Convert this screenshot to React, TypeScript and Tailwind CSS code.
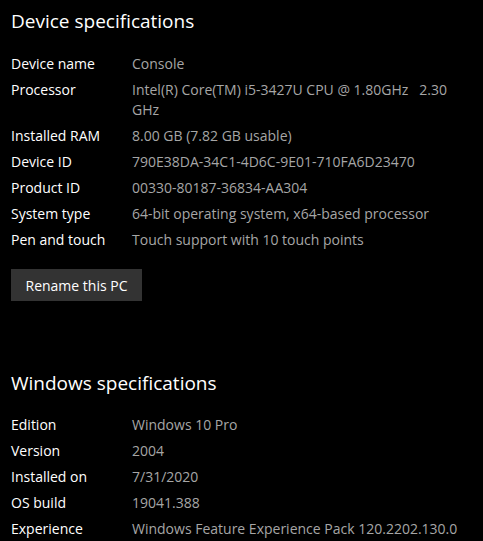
const device: [string, string][] = [
  ['Device name', 'Console'],
  ['Processor', 'Intel(R) Core(TM) i5-3427U CPU @ 1.80GHz   2.30\nGHz'],
  ['Installed RAM', '8.00 GB (7.82 GB usable)'],
  ['Device ID', '790E38DA-34C1-4D6C-9E01-710FA6D23470'],
  ['Product ID', '00330-80187-36834-AA304'],
  ['System type', '64-bit operating system, x64-based processor'],
  ['Pen and touch', 'Touch support with 10 touch points'],
];

const windows: [string, string][] = [
  ['Edition', 'Windows 10 Pro'],
  ['Version', '2004'],
  ['Installed on', '7/31/2020'],
  ['OS build', '19041.388'],
  ['Experience', 'Windows Feature Experience Pack 120.2202.130.0'],
];

const SpecList = ({ rows }: { rows: [string, string][] }) => (
  <dl className="flex flex-col gap-[6px]">
    {rows.map(([label, value]) => (
      <div key={label} className="flex text-[14px] leading-[20px]">
        <dt className="w-[121px] shrink-0 text-white">{label}</dt>
        <dd className="whitespace-pre text-[#a6a6a6]">{value}</dd>
      </div>
    ))}
  </dl>
);

const App = () => {
  return (
    <div
      className="min-h-screen bg-black px-[11px] pt-[7px] text-white"
      style={{ fontFamily: '"Open Sans", "Noto Sans", sans-serif' }}
    >
      <h2 className="text-[19px] leading-[28px]">Device specifications</h2>
      <div className="mt-[19px]">
        <SpecList rows={device} />
      </div>
      <button className="mt-[19px] h-[32px] w-[131px] bg-[#333333] text-[14px] text-white">
        Rename this PC
      </button>
      <h2 className="mt-[68px] text-[19px] leading-[28px]">Windows specifications</h2>
      <div className="mt-[18px]">
        <SpecList rows={windows} />
      </div>
    </div>
  );
};

export default App;
